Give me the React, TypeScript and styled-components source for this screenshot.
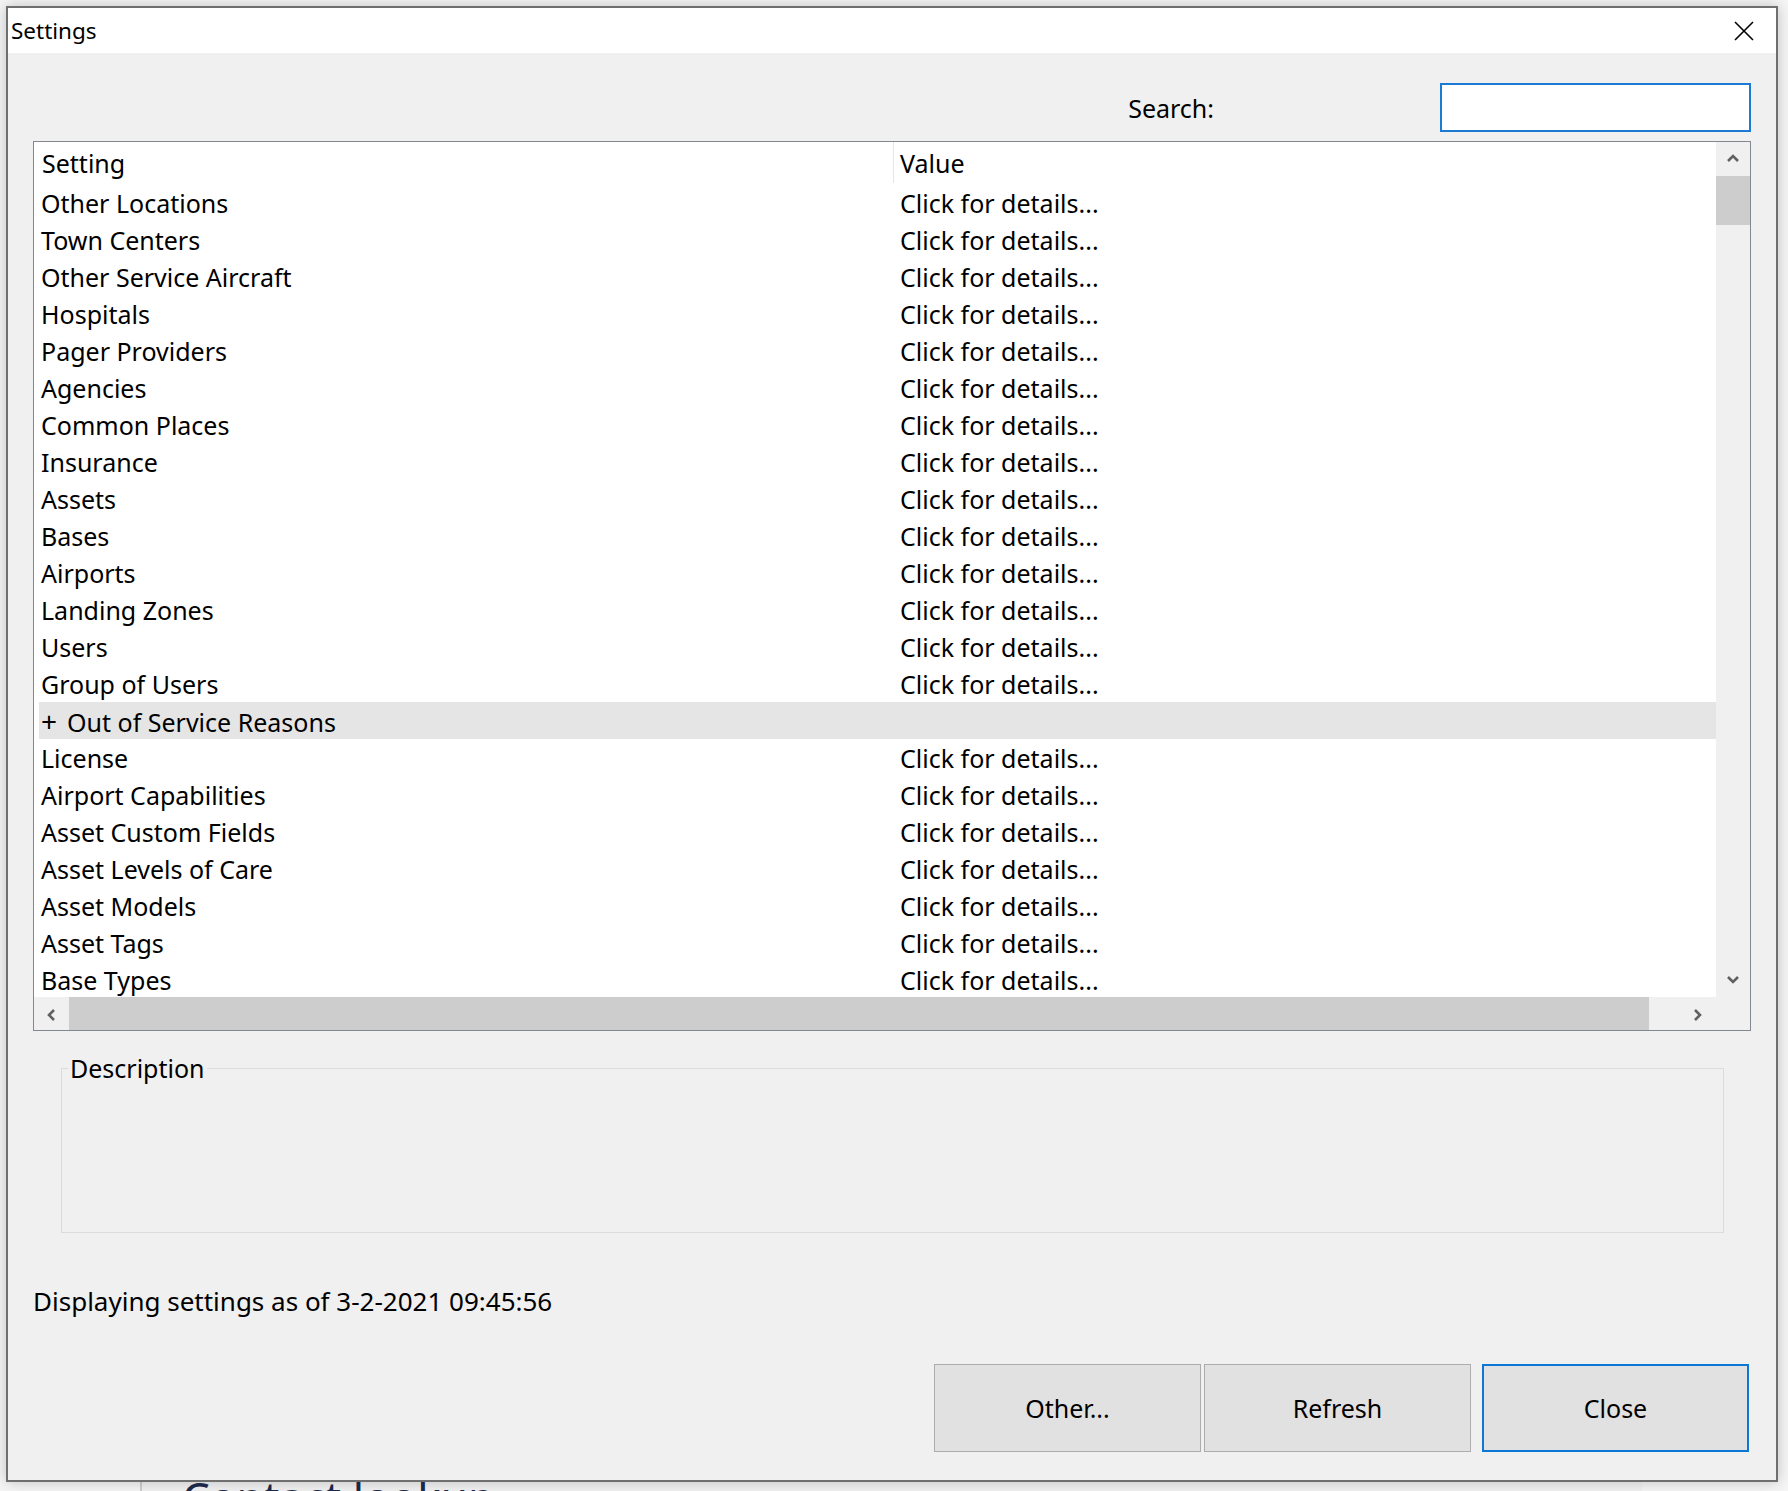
import React from 'react';
import styled, { createGlobalStyle } from 'styled-components';

const GlobalStyle = createGlobalStyle`
  html, body {
    margin: 0;
    padding: 0;
  }
  body {
    font-family: "Noto Sans", "Open Sans", sans-serif;
    color: #000;
    background: #f6f6f6;
  }
`;

const Desktop = styled.div`
  position: relative;
  width: 1788px;
  height: 1491px;
  overflow: hidden;
  background: #f6f6f6;
`;

// window sitting behind the dialog, only its top edge shows at the bottom
const BackWindow = styled.div`
  position: absolute;
  left: 140px;
  top: 1440px;
  width: 1500px;
  height: 200px;
  background: #f2f2f2;
  border-left: 2px solid #cfcfcf;
`;

const BackTitle = styled.div`
  padding: 31px 0 0 40px;
  font-size: 44px;
  line-height: 52px;
  color: #1d2b4c;
`;

const Dialog = styled.div`
  position: absolute;
  left: 6px;
  top: 6px;
  width: 1772px;
  height: 1476px;
  box-sizing: border-box;
  border: 2px solid #6f6f6f;
  box-shadow: 0 0 14px rgba(0, 0, 0, 0.22);
  display: flex;
  flex-direction: column;
  background: #f0f0f0;
`;

const TitleBar = styled.div`
  height: 45px;
  flex-shrink: 0;
  background: #fff;
  display: flex;
  align-items: center;
  justify-content: space-between;
  padding-left: 3px;
`;

const Title = styled.span`
  font-size: 22.5px;
`;

const CloseBox = styled.div`
  width: 64px;
  height: 45px;
  display: flex;
  align-items: center;
  justify-content: center;
`;

const Body = styled.div`
  flex: 1;
  display: flex;
  flex-direction: column;
  padding: 0 25px;
`;

const SearchRow = styled.div`
  margin-top: 30px;
  height: 49px;
  display: flex;
  justify-content: flex-end;
  align-items: center;
`;

const SearchLabel = styled.label`
  font-size: 25px;
  margin-right: 226px;
`;

const SearchInput = styled.input`
  width: 311px;
  height: 49px;
  box-sizing: border-box;
  border: 2px solid #1a7ad4;
  background: #fff;
  outline: none;
  font: inherit;
  font-size: 25px;
  padding: 0 6px;
`;

const ListBox = styled.div`
  margin-top: 9px;
  height: 890px;
  box-sizing: border-box;
  border: 1px solid #828790;
  display: grid;
  grid-template-columns: 1fr 34px;
  grid-template-rows: 1fr 33px;
  background: #f0f0f0;
`;

const Viewport = styled.div`
  background: #fff;
  overflow: hidden;
  padding-left: 5px;
`;

const HeaderRow = styled.div`
  display: grid;
  grid-template-columns: 854px 1fr;
  height: 42px;
  align-items: stretch;
  font-size: 25px;
`;

const HeaderCell = styled.div<{ $divider?: boolean }>`
  display: flex;
  align-items: center;
  padding-left: ${(p) => (p.$divider ? '6px' : '3px')};
  border-left: ${(p) => (p.$divider ? '1px solid #e5e5e5' : 'none')};
  margin-bottom: 1px;
`;

const Row = styled.div<{ $group?: boolean }>`
  display: grid;
  grid-template-columns: 854px 1fr;
  height: 37px;
  align-items: center;
  font-size: 25px;
  white-space: nowrap;
  background: ${(p) => (p.$group ? '#e5e5e5' : 'transparent')};
`;

const NameCell = styled.div`
  padding-left: 2px;
`;

const Expander = styled.span`
  display: inline-block;
  font-size: 28px;
  margin-right: 10px;
`;

const ValueCell = styled.div`
  padding-left: 7px;
`;

const VScroll = styled.div`
  display: flex;
  flex-direction: column;
  background: #f0f0f0;
`;

const HScroll = styled.div`
  display: flex;
  background: #f0f0f0;
`;

const ArrowButton = styled.div<{ $size: number }>`
  flex-shrink: 0;
  width: ${(p) => p.$size}px;
  height: ${(p) => p.$size}px;
  display: flex;
  align-items: center;
  justify-content: center;
`;

const VThumb = styled.div`
  height: 49px;
  background: #cdcdcd;
`;

const HThumb = styled.div`
  width: 1580px;
  background: #cdcdcd;
`;

const Spacer = styled.div`
  flex: 1;
`;

const Corner = styled.div`
  background: #f0f0f0;
`;

const DescriptionBox = styled.fieldset`
  margin: 22px 27px 0 28px;
  height: 180px;
  box-sizing: border-box;
  border: 1px solid #dcdcdc;
  padding: 0 0 0 6px;
  min-width: 0;
`;

const Legend = styled.legend`
  font-size: 25px;
  line-height: 30px;
  padding: 0 2px;
`;

const Status = styled.div`
  margin-top: 51px;
  font-size: 26px;
  line-height: 34px;
`;

const ButtonRow = styled.div`
  margin-top: 46px;
  display: flex;
  justify-content: flex-end;
  padding-right: 2px;
`;

const Button = styled.button<{ $default?: boolean; $gap: number }>`
  width: 267px;
  height: 88px;
  margin-left: ${(p) => p.$gap}px;
  box-sizing: border-box;
  background: #e1e1e1;
  border: ${(p) => (p.$default ? '2px solid #0a78d4' : '1px solid #adadad')};
  font: inherit;
  font-size: 25px;
  color: #000;
  padding: 0;
`;

const Chevron = ({ dir }: { dir: 'up' | 'down' | 'left' | 'right' }) => {
  const points = {
    up: '1,8 6,3 11,8',
    down: '1,3 6,8 11,3',
    left: '8,1 3,6 8,11',
    right: '3,1 8,6 3,11',
  }[dir];
  return (
    <svg width="12" height="12" viewBox="0 0 12 12">
      <polyline points={points} fill="none" stroke="#606060" strokeWidth="2.6" />
    </svg>
  );
};

type Setting = { name: string; group?: boolean };

const settings: Setting[] = [
  { name: 'Other Locations' },
  { name: 'Town Centers' },
  { name: 'Other Service Aircraft' },
  { name: 'Hospitals' },
  { name: 'Pager Providers' },
  { name: 'Agencies' },
  { name: 'Common Places' },
  { name: 'Insurance' },
  { name: 'Assets' },
  { name: 'Bases' },
  { name: 'Airports' },
  { name: 'Landing Zones' },
  { name: 'Users' },
  { name: 'Group of Users' },
  { name: 'Out of Service Reasons', group: true },
  { name: 'License' },
  { name: 'Airport Capabilities' },
  { name: 'Asset Custom Fields' },
  { name: 'Asset Levels of Care' },
  { name: 'Asset Models' },
  { name: 'Asset Tags' },
  { name: 'Base Types' },
];

const App: React.FC = () => {
  return (
    <Desktop>
      <GlobalStyle />
      <BackWindow>
        <BackTitle>Contact lookup</BackTitle>
      </BackWindow>
      <Dialog>
        <TitleBar>
          <Title>Settings</Title>
          <CloseBox>
            <svg width="20" height="20" viewBox="0 0 20 20">
              <path d="M1 1 L19 19 M19 1 L1 19" stroke="#000" strokeWidth="1.6" />
            </svg>
          </CloseBox>
        </TitleBar>
        <Body>
          <SearchRow>
            <SearchLabel htmlFor="search">Search:</SearchLabel>
            <SearchInput id="search" type="text" />
          </SearchRow>

          <ListBox>
            <Viewport>
              <HeaderRow>
                <HeaderCell>Setting</HeaderCell>
                <HeaderCell $divider>Value</HeaderCell>
              </HeaderRow>
              {settings.map((s) => (
                <Row key={s.name} $group={s.group}>
                  <NameCell>
                    {s.group && <Expander>+</Expander>}
                    {s.name}
                  </NameCell>
                  <ValueCell>{s.group ? '' : 'Click for details...'}</ValueCell>
                </Row>
              ))}
            </Viewport>
            <VScroll>
              <ArrowButton $size={34}>
                <Chevron dir="up" />
              </ArrowButton>
              <VThumb />
              <Spacer />
              <ArrowButton $size={34}>
                <Chevron dir="down" />
              </ArrowButton>
            </VScroll>
            <HScroll>
              <ArrowButton $size={35}>
                <Chevron dir="left" />
              </ArrowButton>
              <HThumb />
              <Spacer />
              <ArrowButton $size={36}>
                <Chevron dir="right" />
              </ArrowButton>
            </HScroll>
            <Corner />
          </ListBox>

          <DescriptionBox>
            <Legend>Description</Legend>
          </DescriptionBox>

          <Status>Displaying settings as of 3-2-2021 09:45:56</Status>

          <ButtonRow>
            <Button $gap={0}>Other...</Button>
            <Button $gap={3}>Refresh</Button>
            <Button $gap={11} $default>
              Close
            </Button>
          </ButtonRow>
        </Body>
      </Dialog>
    </Desktop>
  );
};

export default App;
